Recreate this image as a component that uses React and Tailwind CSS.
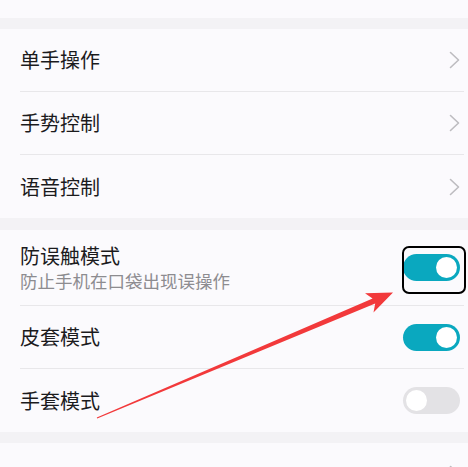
import React from 'react';

const ChevronRight = () => (
  <svg width="12" height="18" viewBox="0 0 12 18" fill="none" className="shrink-0">
    <path d="M1.5 1.5 L9.5 9 L1.5 16.5" stroke="#bdbcc0" strokeWidth="1.6" strokeLinecap="round" strokeLinejoin="round" />
  </svg>
);

const Toggle = ({ on }) => (
  <div
    className={`w-[57px] h-[27px] rounded-full flex items-center px-[3px] shrink-0 ${
      on ? 'bg-[#0aa8bf] justify-end' : 'bg-[#e3e2e5] justify-start'
    }`}
  >
    <div className="w-[21px] h-[21px] rounded-full bg-white" />
  </div>
);

const NavRow = ({ label, last }) => (
  <div className="h-[63px] flex flex-col pl-5">
    <div className="flex-1 flex items-center justify-between pr-[7px]">
      <span className="text-[20px] text-[#1b1b1d]">{label}</span>
      <ChevronRight />
    </div>
    {!last && <div className="h-px bg-[#e8e7ea] mr-1" />}
  </div>
);

const SwitchRow = ({ label, sub, on, last, height }) => (
  <div className={`flex flex-col pl-5 ${height}`}>
    <div className="flex-1 flex items-center justify-between pr-2">
      <div className="flex flex-col">
        <span className="text-[20px] leading-[26px] text-[#1b1b1d]">{label}</span>
        {sub && <span className="text-[17.5px] leading-[24px] text-[#8d8c90]">{sub}</span>}
      </div>
      <Toggle on={on} />
    </div>
    {!last && <div className="h-px bg-[#e8e7ea] mr-1" />}
  </div>
);

export default function App() {
  return (
    <div className="relative w-[468px] h-[467px] overflow-hidden bg-[#f3f2f5] font-['Noto_Sans_CJK_SC',sans-serif]">
      <div className="h-[18px] bg-[#fbfafd]" />
      <div className="h-[11px]" />
      <div className="bg-[#fbfafd]">
        <NavRow label="单手操作" />
        <NavRow label="手势控制" />
        <NavRow label="语音控制" last />
      </div>
      <div className="h-[12px]" />
      <div className="bg-[#fbfafd]">
        <SwitchRow label="防误触模式" sub="防止手机在口袋出现误操作" on height="h-[76px]" />
        <SwitchRow label="皮套模式" on height="h-[63px]" />
        <SwitchRow label="手套模式" on={false} height="h-[63px]" last />
      </div>
      <div className="h-[11px]" />
      <div className="bg-[#fbfafd] h-[63px] flex items-start justify-between pl-5 pr-[7px] pt-[22px]">
        <span className="text-[20px] leading-[26px] text-[#1b1b1d]">智能辅助</span>
        <ChevronRight />
      </div>

      <div className="absolute left-[402px] top-[246px] w-[64px] h-[48px] border-2 border-black rounded-[7px]" />

      <svg className="absolute inset-0 pointer-events-none" width="468" height="467" viewBox="0 0 468 467">
        <polygon
          points="96.8,417.5 372.6,298.6 365,293.2 393,292.6 373.5,312.5 375.2,303.4 97.2,418.6"
          fill="#f2393b"
        />
      </svg>
    </div>
  );
}
